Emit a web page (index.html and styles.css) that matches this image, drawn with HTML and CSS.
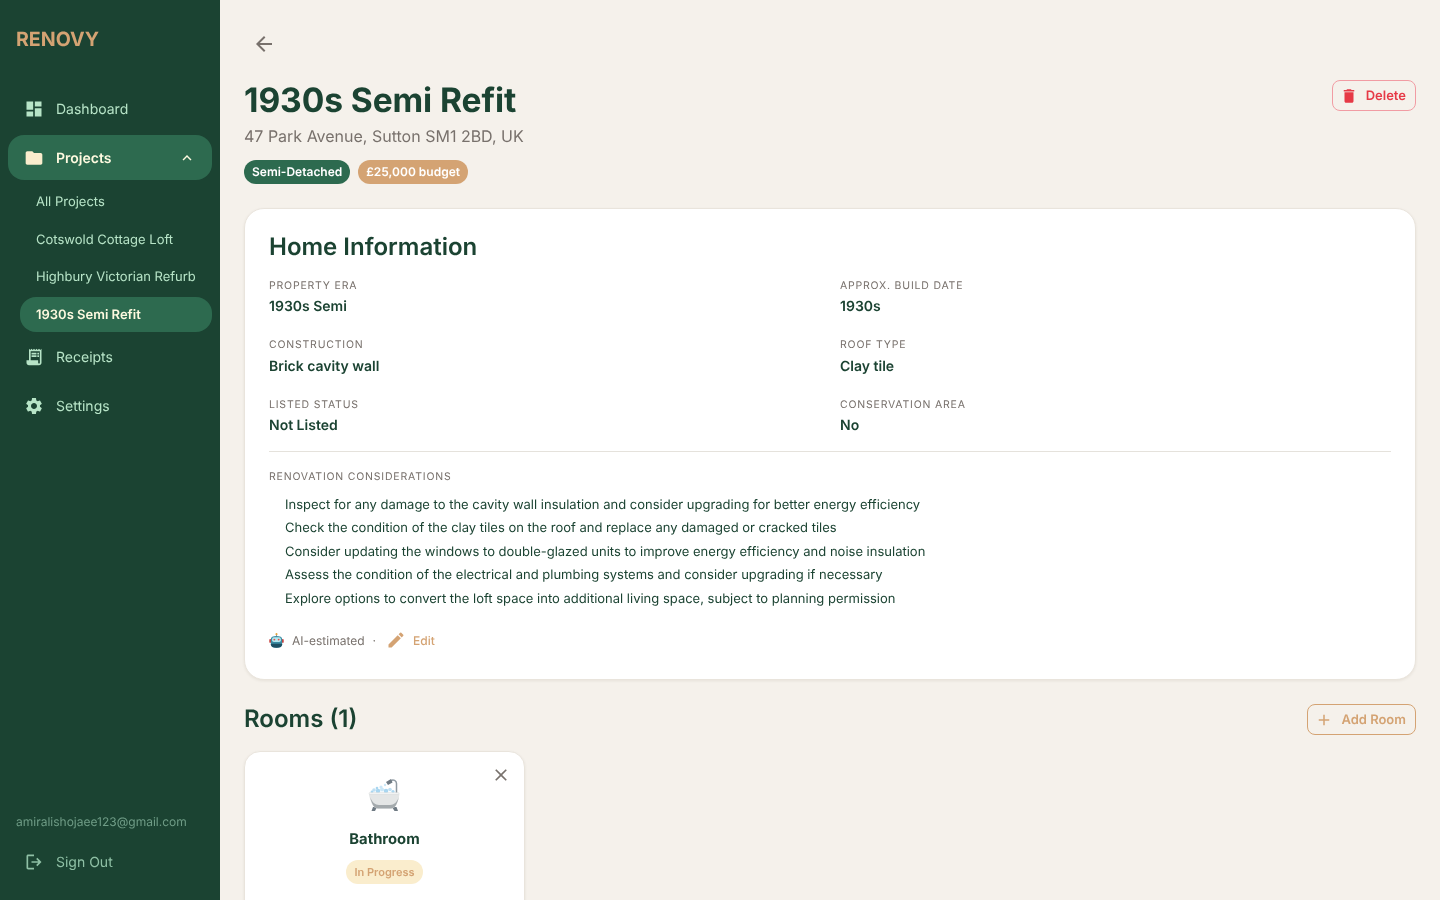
FILE: index.html
```html
<!DOCTYPE html>
<html lang="en">
<head>
<meta charset="utf-8">
<title>1930s Semi Refit</title>
<link rel="stylesheet" href="styles.css">
</head>
<body>
<div class="app">
	<aside class="sidebar">
		<div class="logo">RENOVY</div>
		<nav class="nav">
			<a class="nav-item">
				<svg class="nav-icon" viewBox="0 0 24 24"><path d="M3 13h8V3H3v10zm0 8h8v-6H3v6zm10 0h8V11h-8v10zm0-18v6h8V3h-8z"/></svg>
				<span>Dashboard</span>
			</a>
			<a class="nav-item active">
				<svg class="nav-icon" viewBox="0 0 24 24"><path d="M10 4H4c-1.1 0-2 .9-2 2v12c0 1.1.9 2 2 2h16c1.1 0 2-.9 2-2V8c0-1.100-.9-2-2-2h-8l-2-2z"/></svg>
				<span>Projects</span>
				<svg class="chevron" viewBox="0 0 24 24"><path d="M12 8l-6 6 1.410 1.410L12 10.830l4.590 4.580L18 14z"/></svg>
			</a>
			<div class="subnav">
				<a class="sub-item">All Projects</a>
				<a class="sub-item">Cotswold Cottage Loft</a>
				<a class="sub-item">Highbury Victorian Refurb</a>
				<a class="sub-item current">1930s Semi Refit</a>
			</div>
			<a class="nav-item">
				<svg class="nav-icon" viewBox="0 0 24 24"><path d="M19.500 3.500 18 2l-1.500 1.500L15 2l-1.500 1.500L12 2l-1.500 1.500L9 2 7.500 3.500 6 2v14H3v3c0 1.660 1.340 3 3 3h12c1.660 0 3-1.340 3-3V2l-1.500 1.500zM19 19c0 .55-.45 1-1 1s-1-.45-1-1v-3H8V5h11v14z"/><path d="M9 7h6v2H9zM16 7h2v2h-2zM9 10h6v2H9zM16 10h2v2h-2z"/></svg>
				<span>Receipts</span>
			</a>
			<a class="nav-item">
				<svg class="nav-icon" viewBox="0 0 24 24"><path d="M19.140 12.940c.04-.3.060-.61.060-.94 0-.32-.020-.64-.070-.94l2.030-1.580c.18-.14.230-.41.120-.61l-1.920-3.320c-.12-.22-.37-.29-.59-.22l-2.390.96c-.5-.38-1.030-.7-1.620-.94l-.36-2.540c-.04-.24-.24-.41-.48-.41h-3.840c-.24 0-.43.170-.47.410l-.36 2.540c-.59.24-1.130.57-1.620.94l-2.390-.96c-.22-.08-.47 0-.59.22L2.740 8.870c-.12.21-.08.47.12.610l2.030 1.580c-.05.3-.09.630-.09.940s.020.640.070.940l-2.030 1.580c-.18.140-.23.410-.12.610l1.920 3.320c.12.220.37.290.59.220l2.390-.96c.5.380 1.030.7 1.620.94l.36 2.540c.05.240.24.410.48.410h3.840c.24 0 .44-.170.47-.410l.36-2.540c.59-.24 1.130-.56 1.620-.94l2.390.96c.22.080.47 0 .59-.22l1.920-3.320c.12-.22.070-.47-.12-.61l-2.010-1.580zM12 15.600c-1.980 0-3.600-1.620-3.600-3.600s1.620-3.600 3.600-3.600 3.600 1.620 3.600 3.600-1.620 3.600-3.600 3.600z"/></svg>
				<span>Settings</span>
			</a>
		</nav>
		<div class="side-foot">
			<div class="email">amiralishojaee123@gmail.com</div>
			<a class="nav-item signout">
				<svg class="nav-icon" viewBox="0 0 24 24"><path d="M5 21c-.55 0-1.020-.2-1.410-.59C3.200 20.020 3 19.550 3 19V5c0-.55.2-1.020.59-1.410C3.980 3.200 4.450 3 5 3h7v2H5v14h7v2H5zm11-4-1.380-1.450 2.550-2.550H9v-2h8.170l-2.550-2.550L16 7l5 5-5 5z"/></svg>
				<span>Sign Out</span>
			</a>
		</div>
	</aside>

	<main class="main">
		<button class="back" aria-label="Back">
			<svg viewBox="0 0 24 24"><path d="M20 11H7.830l5.590-5.590L12 4l-8 8 8 8 1.410-1.410L7.830 13H20v-2z"/></svg>
		</button>

		<header class="page-head">
			<div>
				<h1>1930s Semi Refit</h1>
				<p class="address">47 Park Avenue, Sutton SM1 2BD, UK</p>
				<div class="chips">
					<span class="chip green">Semi-Detached</span>
					<span class="chip tan">£25,000 budget</span>
				</div>
			</div>
			<button class="btn danger">
				<svg viewBox="0 0 24 24"><path d="M6 19c0 1.100.9 2 2 2h8c1.100 0 2-.9 2-2V7H6v12zM19 4h-3.500l-1-1h-5l-1 1H5v2h14V4z"/></svg>
				Delete
			</button>
		</header>

		<section class="card info">
			<h2>Home Information</h2>
			<div class="facts">
				<div class="fact"><div class="label">Property Era</div><div class="value">1930s Semi</div></div>
				<div class="fact"><div class="label">Approx. Build Date</div><div class="value">1930s</div></div>
				<div class="fact"><div class="label">Construction</div><div class="value">Brick cavity wall</div></div>
				<div class="fact"><div class="label">Roof Type</div><div class="value">Clay tile</div></div>
				<div class="fact"><div class="label">Listed Status</div><div class="value">Not Listed</div></div>
				<div class="fact"><div class="label">Conservation Area</div><div class="value">No</div></div>
			</div>
			<hr class="rule">
			<div class="label">Renovation Considerations</div>
			<ul class="notes">
				<li>Inspect for any damage to the cavity wall insulation and consider upgrading for better energy efficiency</li>
				<li>Check the condition of the clay tiles on the roof and replace any damaged or cracked tiles</li>
				<li>Consider updating the windows to double-glazed units to improve energy efficiency and noise insulation</li>
				<li>Assess the condition of the electrical and plumbing systems and consider upgrading if necessary</li>
				<li>Explore options to convert the loft space into additional living space, subject to planning permission</li>
			</ul>
			<div class="estimate">
				<svg class="robot" viewBox="0 0 16 16">
					<circle cx="8" cy="1.200" r="1.100" fill="#e8a33a"/>
					<rect x="7.500" y="2" width="1" height="2" fill="#8a98a3"/>
					<rect x=".3" y="6.500" width="2" height="4" rx="1" fill="#c9413c"/>
					<rect x="13.700" y="6.500" width="2" height="4" rx="1" fill="#c9413c"/>
					<path d="M2 6.500c0-2 2-3.300 6-3.300s6 1.300 6 3.300V12c0 2.500-2 3.800-6 3.800S2 14.500 2 12z" fill="#3a8ba3"/>
					<path d="M2 11.500h12v.5c0 2.500-2 3.800-6 3.800S2 14.500 2 12z" fill="#1d4f63"/>
					<rect x="3.300" y="4.500" width="9.400" height="5" rx="1.800" fill="#b5e8ef"/>
					<circle cx="5.700" cy="7" r="1" fill="#e05050"/>
					<circle cx="10.300" cy="7" r="1" fill="#e05050"/>
				</svg>
				<span class="est-text">AI-estimated</span>
				<span class="dot">·</span>
				<a class="edit">
					<svg viewBox="0 0 24 24"><path d="M3 17.250V21h3.750L17.810 9.940l-3.750-3.750L3 17.250zM20.710 7.040a.996.996 0 0 0 0-1.410l-2.340-2.340a.996.996 0 0 0-1.410 0l-1.830 1.830 3.750 3.750 1.830-1.830z"/></svg>
					Edit
				</a>
			</div>
		</section>

		<div class="rooms-head">
			<h2>Rooms (1)</h2>
			<button class="btn outline">
				<svg viewBox="0 0 24 24"><path d="M19 13h-6v6h-2v-6H5v-2h6V5h2v6h6v2z"/></svg>
				Add Room
			</button>
		</div>

		<div class="rooms">
			<article class="card room">
				<button class="close" aria-label="Remove room">
					<svg viewBox="0 0 24 24"><path d="M19 6.410 17.590 5 12 10.590 6.410 5 5 6.410 10.590 12 5 17.590 6.410 19 12 13.410 17.590 19 19 17.590 13.410 12z"/></svg>
				</button>
				<svg class="bath" viewBox="0 0 36 36">
					<path d="M29.500 17V6.500a3.500 3.500 0 0 0-5.500-2.800" fill="none" stroke="#8f99a1" stroke-width="1.500"/>
					<path d="M19 5l5-3 1.500 3.500L21 8z" fill="#6f7a83"/>
					<circle cx="14" cy="10" r="1.600" fill="#cbe7f7"/><circle cx="18" cy="8" r="1.200" fill="#cbe7f7"/><circle cx="10" cy="11" r="1.300" fill="#a9d6f0"/>
					<circle cx="7" cy="13" r="1.800" fill="#bfe0f3"/><circle cx="11" cy="14" r="2.300" fill="#a9d6f0"/><circle cx="15" cy="12.500" r="2" fill="#cbe7f7"/>
					<circle cx="19" cy="14" r="2.300" fill="#a9d6f0"/><circle cx="23" cy="12.500" r="1.800" fill="#bfe0f3"/><circle cx="26" cy="14.500" r="1.600" fill="#a9d6f0"/><circle cx="5" cy="15" r="1.400" fill="#a9d6f0"/>
					<path d="M6 30l-1.500 4H8l2-4zM25 30l2.500 4H31l-1.500-4z" fill="#6f7a83"/>
					<path d="M2.500 16h29c1 0 1 1 .8 2-1 7-3.300 13.500-8.300 13.500H11C6 31.500 3.500 25 2 18c-.2-1 0-2 .5-2z" fill="#e4e6e6"/>
					<path d="M3 20c2 7 4 11.500 8 11.500h13c4 0 6-4.500 8-11.500-2 5-5 8-9 8H12c-4 0-7-3-9-8z" fill="#a4aaad"/>
					<rect x="2" y="15.500" width="30" height="1.800" rx=".9" fill="#f6f7f7" stroke="#c4c8ca" stroke-width=".3"/>
				</svg>
				<h3>Bathroom</h3>
				<span class="status">In Progress</span>
			</article>
		</div>
	</main>
</div>
</body>
</html>
```

FILE: styles.css
```css
* {
	box-sizing: border-box;
}
html, body {
	height: 100%;
	margin: 0;
}
body {
	font-family: Inter, "Liberation Sans", sans-serif;
	background: #f5f1eb;
	color: #1b4332;
	overflow: hidden;
	text-rendering: geometricPrecision;
}
.app {
	display: flex;
	height: 100vh;
	will-change: transform;
}

/* sidebar */
.sidebar {
	width: 220px;
	flex: none;
	background: #1b4332;
	display: flex;
	flex-direction: column;
	padding: 0 8px;
}
.logo {
	color: #d4a373;
	font-size: 19.600px;
	font-weight: 700;
	line-height: 24px;
	padding: 27px 8px 0;
	height: 86px;
}
.nav {
	flex: 1;
	display: flex;
	flex-direction: column;
	gap: 4px;
}
.nav-item {
	display: flex;
	align-items: center;
	height: 45px;
	padding: 0 16px;
	border-radius: 16px;
	color: #b7e4c7;
	font-size: 14px;
}
.nav-item span {
	padding-top: 2px;
}
.nav-item.active {
	background: #2d6a4f;
	color: #fefae0;
	font-weight: 600;
}
.nav-icon {
	width: 20px;
	height: 20px;
	margin-right: 12px;
	fill: currentColor;
	flex: none;
}
.nav-item.active .nav-icon {
	fill: #faedcd;
}
.chevron {
	width: 18px;
	height: 18px;
	margin-left: auto;
	fill: currentColor;
}
.subnav {
	display: flex;
	flex-direction: column;
	gap: 2px;
	padding: 0 0 0 12px;
	margin-top: .25px;
	margin-bottom: -2.250px;
}
.sub-item {
	display: flex;
	align-items: center;
	height: 35.500px;
	padding: 0 16px;
	border-radius: 16px;
	color: #b7e4c7;
	font-size: 13px;
}
.sub-item.current {
	background: #2d6a4f;
	color: #fefae0;
	font-weight: 600;
}
.side-foot {
	padding-bottom: 16px;
}
.email {
	color: #6f9c86;
	font-size: 12px;
	line-height: 18px;
	padding: 0 8px;
	margin-bottom: 8px;
}
.signout {
	color: #8fc0a5;
}

/* main */
.main {
	flex: 1;
	min-width: 0;
	padding: 24px;
	overflow: hidden;
}
.back {
	display: flex;
	align-items: center;
	justify-content: center;
	width: 40px;
	height: 40px;
	padding: 0;
	border: 0;
	background: none;
	margin-bottom: 12px;
}
.back svg {
	width: 24px;
	height: 24px;
	fill: #78716c;
}
.page-head {
	display: flex;
	justify-content: space-between;
	align-items: flex-start;
	margin-bottom: 24px;
}
h1 {
	margin: 0;
	padding-top: 2px;
	font-size: 33.600px;
	font-weight: 700;
	letter-spacing: -.1px;
	line-height: 46px;
}
.address {
	margin: 0 0 12px;
	color: #78716c;
	font-size: 16px;
	line-height: 24px;
}
.chips {
	display: flex;
	gap: 8px;
}
.chip {
	height: 24px;
	padding: 0 8px;
	border-radius: 12px;
	color: #fff;
	font-size: 12px;
	font-weight: 600;
	line-height: 24px;
}
.chip.green {
	background: #2d6a4f;
}
.chip.tan {
	background: #d4a373;
}
.btn {
	display: inline-flex;
	align-items: center;
	height: 31px;
	padding: 0 9px 0 7px;
	border-radius: 8px;
	background: none;
	font-family: inherit;
	font-size: 13px;
	font-weight: 600;
	text-rendering: geometricPrecision;
}
.btn svg {
	width: 18px;
	height: 18px;
	fill: currentColor;
	margin-right: 8px;
}
.btn.danger {
	color: #e63946;
	border: 1px solid #f19ca3;
	margin-top: 4px;
}
.btn.outline {
	color: #d4a373;
	border: 1px solid #d4a373;
}

/* cards */
.card {
	background: #fff;
	border: 1px solid #e9e4dc;
	border-radius: 20px;
	box-shadow: 0 1px 3px rgba(60, 50, 30, .08);
}
.info {
	padding: 24px;
	height: 472px;
	margin-bottom: 24px;
}
.info h2 {
	margin: 0 0 16.500px;
	font-size: 24px;
	font-weight: 600;
	line-height: 28px;
}
.facts {
	display: grid;
	grid-template-columns: 1fr 1fr;
	column-gap: 20px;
	row-gap: 19px;
}
.label {
	color: #78716c;
	font-size: 10.500px;
	letter-spacing: .8px;
	line-height: 16px;
	text-transform: uppercase;
}
.value {
	font-size: 14px;
	font-weight: 600;
	line-height: 22px;
	margin-top: 2.500px;
}
.rule {
	border: 0;
	border-top: 1px solid #e5e2dc;
	margin: 14px 0 16.500px;
}
.notes {
	list-style: none;
	margin: 9.250px 0 0;
	padding: 0 0 0 16px;
	font-size: 13px;
	line-height: 23.500px;
}
.estimate {
	display: flex;
	align-items: center;
	margin-top: 19px;
	font-size: 12px;
	color: #78716c;
}
.robot {
	width: 15px;
	height: 15px;
	margin-right: 8px;
}
.dot {
	margin: 0 10px 0 8px;
}
.edit {
	display: flex;
	align-items: center;
	color: #d4a373;
	font-weight: 500;
}
.edit svg {
	width: 20px;
	height: 20px;
	fill: currentColor;
	margin-right: 7px;
}

/* rooms */
.rooms-head {
	display: flex;
	justify-content: space-between;
	align-items: center;
	margin-bottom: 16px;
	height: 31px;
}
.rooms-head h2 {
	margin: 0 0 2px;
	font-size: 24px;
	font-weight: 600;
}
.rooms {
	display: grid;
	grid-template-columns: 281px;
}
.room {
	position: relative;
	height: 190px;
	border-radius: 16px;
	padding-top: 25px;
	display: flex;
	flex-direction: column;
	align-items: center;
}
.close {
	position: absolute;
	top: 11px;
	right: 11px;
	width: 24px;
	height: 24px;
	padding: 2px;
	border: 0;
	background: none;
}
.close svg {
	width: 20px;
	height: 20px;
	fill: #78716c;
}
.bath {
	width: 36px;
	height: 36px;
}
h3 {
	margin: 15px 0 10px;
	font-size: 14.800px;
	font-weight: 700;
	line-height: 22px;
}
.status {
	height: 24px;
	padding: 0 8px;
	border-radius: 12px;
	background: #faedcd;
	color: #d4a373;
	font-size: 11px;
	font-weight: 600;
	line-height: 24px;
}
```
